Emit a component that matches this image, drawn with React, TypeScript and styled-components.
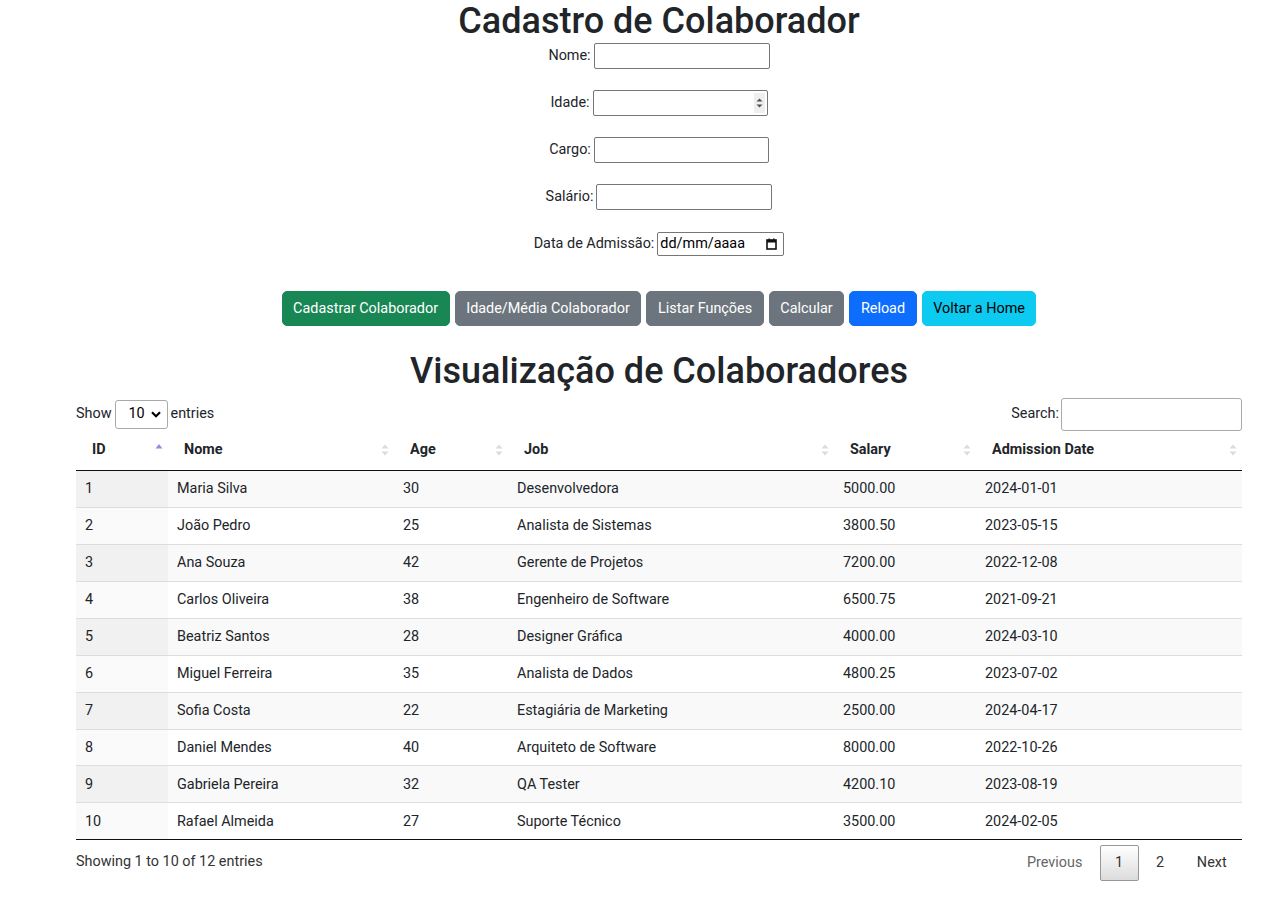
import React from 'react';
import styled, { createGlobalStyle, css } from 'styled-components';

const GlobalStyle = createGlobalStyle`
  body {
    margin: 0;
    font-family: "Segoe UI", Roboto, "Noto Sans", sans-serif;
    font-size: 14.4px;
    line-height: 1.5;
    color: #212529;
    background: #fff;
  }
  * { box-sizing: border-box; }
`;

type Variant = 'success' | 'secondary' | 'primary' | 'info';

interface Employee {
  id: number;
  name: string;
  age: number;
  job: string;
  salary: string;
  date: string;
}

const employees: Employee[] = [
  { id: 1, name: 'Maria Silva', age: 30, job: 'Desenvolvedora', salary: '5000.00', date: '2024-01-01' },
  { id: 2, name: 'João Pedro', age: 25, job: 'Analista de Sistemas', salary: '3800.50', date: '2023-05-15' },
  { id: 3, name: 'Ana Souza', age: 42, job: 'Gerente de Projetos', salary: '7200.00', date: '2022-12-08' },
  { id: 4, name: 'Carlos Oliveira', age: 38, job: 'Engenheiro de Software', salary: '6500.75', date: '2021-09-21' },
  { id: 5, name: 'Beatriz Santos', age: 28, job: 'Designer Gráfica', salary: '4000.00', date: '2024-03-10' },
  { id: 6, name: 'Miguel Ferreira', age: 35, job: 'Analista de Dados', salary: '4800.25', date: '2023-07-02' },
  { id: 7, name: 'Sofia Costa', age: 22, job: 'Estagiária de Marketing', salary: '2500.00', date: '2024-04-17' },
  { id: 8, name: 'Daniel Mendes', age: 40, job: 'Arquiteto de Software', salary: '8000.00', date: '2022-10-26' },
  { id: 9, name: 'Gabriela Pereira', age: 32, job: 'QA Tester', salary: '4200.10', date: '2023-08-19' },
  { id: 10, name: 'Rafael Almeida', age: 27, job: 'Suporte Técnico', salary: '3500.00', date: '2024-02-05' },
];

const columns = [
  { label: 'ID', width: 92 },
  { label: 'Nome', width: 226 },
  { label: 'Age', width: 114 },
  { label: 'Job', width: 326 },
  { label: 'Salary', width: 142 },
  { label: 'Admission Date', width: 266 },
];

const Page = styled.div`
  width: 1166px;
  margin-left: 76px;
`;

const Title = styled.h1`
  margin: 0;
  font-size: 36px;
  font-weight: 500;
  line-height: 1.2;
  text-align: center;
`;

const Form = styled.form`
  display: flex;
  flex-direction: column;
  align-items: center;
  gap: 21px;
`;

const FieldRow = styled.div`
  display: flex;
  align-items: center;
  gap: 3px;
  height: 26px;
`;

const Label = styled.label`
  font-size: 14.4px;
`;

const TextInput = styled.input<{ $w: number }>`
  width: ${p => p.$w}px;
  height: 26px;
  padding: 1px 2px;
  border: 1px solid #767676;
  border-radius: 2px;
  font: inherit;
  background: #fff;
`;

const NumberWrap = styled.div`
  position: relative;
`;

const Spinner = styled.div`
  position: absolute;
  top: 3px;
  right: 3px;
  width: 11px;
  height: 20px;
  background: #efefef;
  display: flex;
  align-items: center;
  justify-content: center;
`;

const DateBox = styled.div`
  width: 127px;
  height: 24px;
  border: 1px solid #767676;
  border-radius: 2px;
  display: flex;
  align-items: center;
  justify-content: space-between;
  padding: 0 6px 0 2px;
  font-size: 14.4px;
  color: #000;
`;

const ButtonBar = styled.div`
  display: flex;
  justify-content: center;
  gap: 5px;
  margin-top: 34px;
`;

const variantStyles: Record<Variant, ReturnType<typeof css>> = {
  success: css`background: #198754; border-color: #198754; color: #fff;`,
  secondary: css`background: #6c757d; border-color: #6c757d; color: #fff;`,
  primary: css`background: #0d6efd; border-color: #0d6efd; color: #fff;`,
  info: css`background: #0dcaf0; border-color: #0dcaf0; color: #000;`,
};

const Button = styled.button<{ $variant: Variant }>`
  font: inherit;
  font-size: 14.4px;
  line-height: 21.6px;
  padding: 5.4px 10.6px;
  border: 1px solid transparent;
  border-radius: 5px;
  cursor: pointer;
  ${p => variantStyles[p.$variant]}
`;

const SectionTitle = styled.h2`
  margin: 24px 0 5px;
  font-size: 36px;
  font-weight: 500;
  line-height: 1.2;
  text-align: center;
`;

const Controls = styled.div`
  display: flex;
  justify-content: space-between;
  align-items: center;
  height: 33px;
`;

const LengthLabel = styled.div`
  display: flex;
  align-items: center;
  gap: 3px;
`;

const FakeSelect = styled.div`
  width: 53px;
  height: 29px;
  border: 1px solid #aaa;
  border-radius: 3px;
  display: flex;
  align-items: center;
  justify-content: space-between;
  padding: 0 6px 0 13px;
  color: #000;
`;

const SearchLabel = styled.label`
  display: flex;
  align-items: center;
  gap: 2px;
`;

const SearchInput = styled.input`
  width: 181px;
  height: 33px;
  border: 1px solid #aaa;
  border-radius: 3px;
  padding: 4px;
  font: inherit;
`;

const Table = styled.table`
  width: 1166px;
  border-collapse: separate;
  border-spacing: 0;
  table-layout: fixed;
  border-bottom: 1px solid #111;
`;

const Th = styled.th`
  padding: 8.7px 5px 8.7px 16px;
  text-align: left;
  font-weight: 700;
  line-height: 21.6px;
  border-bottom: 1px solid #111;
`;

const ThInner = styled.div`
  display: flex;
  align-items: center;
  justify-content: space-between;
`;

const Tr = styled.tr<{ $odd: boolean }>`
  background: ${p => (p.$odd ? '#f9f9f9' : '#fff')};
`;

const Td = styled.td<{ $sorted?: boolean; $odd: boolean; $first: boolean }>`
  padding: 7.2px 9px;
  line-height: 21.6px;
  border-top: ${p => (p.$first ? 'none' : '1px solid #ddd')};
  background: ${p => (p.$sorted ? (p.$odd ? '#f1f1f1' : '#fafafa') : 'transparent')};
`;

const Footer = styled.div`
  display: flex;
  justify-content: space-between;
  align-items: flex-start;
`;

const Info = styled.div`
  padding-top: 11px;
  color: #333;
`;

const Pagination = styled.div`
  display: flex;
  padding-top: 5px;
`;

const PageButton = styled.span<{ $current?: boolean; $disabled?: boolean }>`
  display: inline-block;
  padding: 6px 14.4px;
  margin-left: 2px;
  line-height: 21.6px;
  border: 1px solid transparent;
  border-radius: 2px;
  color: ${p => (p.$disabled ? '#666' : '#333')};
  ${p =>
    p.$current &&
    css`
      border-color: #979797;
      background: linear-gradient(to bottom, #fff 0%, #dcdcdc 100%);
    `}
`;

const SortIcon: React.FC<{ active?: boolean }> = ({ active }) => (
  <svg width="8" height="12" viewBox="0 0 8 12">
    {active ? (
      <path d="M4 0 L7.5 4.5 L0.5 4.5 Z" fill="#8e8fdd" />
    ) : (
      <>
        <path d="M4 0.5 L7.5 4.5 L0.5 4.5 Z" fill="#dcdcdc" />
        <path d="M4 11.5 L7.5 7.5 L0.5 7.5 Z" fill="#dcdcdc" />
      </>
    )}
  </svg>
);

const App: React.FC = () => {
  return (
    <Page>
      <GlobalStyle />
      <Title>Cadastro de Colaborador</Title>
      <Form onSubmit={e => e.preventDefault()}>
        <FieldRow>
          <Label>Nome:</Label>
          <TextInput $w={176} />
        </FieldRow>
        <FieldRow>
          <Label>Idade:</Label>
          <NumberWrap>
            <TextInput $w={175} />
            <Spinner>
              <svg width="7" height="14" viewBox="0 0 7 14">
                <path d="M3.5 2.5 L6.5 5.5 L0.5 5.5 Z" fill="#505050" />
                <path d="M3.5 11.5 L6.5 8.5 L0.5 8.5 Z" fill="#505050" />
              </svg>
            </Spinner>
          </NumberWrap>
        </FieldRow>
        <FieldRow>
          <Label>Cargo:</Label>
          <TextInput $w={175} />
        </FieldRow>
        <FieldRow>
          <Label>Salário:</Label>
          <TextInput $w={176} />
        </FieldRow>
        <FieldRow>
          <Label>Data de Admissão:</Label>
          <DateBox>
            <span>dd/mm/aaaa</span>
            <svg width="11" height="12" viewBox="0 0 11 12">
              <rect x="1" y="2" width="9" height="9" fill="none" stroke="#111" strokeWidth="1.6" />
              <rect x="1" y="2" width="9" height="2.5" fill="#111" />
              <rect x="2.5" y="0.5" width="1.4" height="2" fill="#111" />
              <rect x="7.1" y="0.5" width="1.4" height="2" fill="#111" />
            </svg>
          </DateBox>
        </FieldRow>
      </Form>

      <ButtonBar>
        <Button $variant="success">Cadastrar Colaborador</Button>
        <Button $variant="secondary">Idade/Média Colaborador</Button>
        <Button $variant="secondary">Listar Funções</Button>
        <Button $variant="secondary">Calcular</Button>
        <Button $variant="primary">Reload</Button>
        <Button $variant="info">Voltar a Home</Button>
      </ButtonBar>

      <SectionTitle>Visualização de Colaboradores</SectionTitle>

      <Controls>
        <LengthLabel>
          Show
          <FakeSelect>
            <span>10</span>
            <svg width="10" height="7" viewBox="0 0 10 7">
              <path d="M1 1.2 L5 5.2 L9 1.2" fill="none" stroke="#000" strokeWidth="2.2" />
            </svg>
          </FakeSelect>
          entries
        </LengthLabel>
        <SearchLabel>
          Search:
          <SearchInput />
        </SearchLabel>
      </Controls>

      <Table>
        <colgroup>
          {columns.map(c => (
            <col key={c.label} style={{ width: c.width }} />
          ))}
        </colgroup>
        <thead>
          <tr>
            {columns.map((c, i) => (
              <Th key={c.label}>
                <ThInner>
                  <span>{c.label}</span>
                  <SortIcon active={i === 0} />
                </ThInner>
              </Th>
            ))}
          </tr>
        </thead>
        <tbody>
          {employees.map((e, idx) => {
            const odd = idx % 2 === 0;
            const first = idx === 0;
            return (
              <Tr key={e.id} $odd={odd}>
                <Td $sorted $odd={odd} $first={first}>{e.id}</Td>
                <Td $odd={odd} $first={first}>{e.name}</Td>
                <Td $odd={odd} $first={first}>{e.age}</Td>
                <Td $odd={odd} $first={first}>{e.job}</Td>
                <Td $odd={odd} $first={first}>{e.salary}</Td>
                <Td $odd={odd} $first={first}>{e.date}</Td>
              </Tr>
            );
          })}
        </tbody>
      </Table>

      <Footer>
        <Info>Showing 1 to 10 of 12 entries</Info>
        <Pagination>
          <PageButton $disabled>Previous</PageButton>
          <PageButton $current>1</PageButton>
          <PageButton>2</PageButton>
          <PageButton>Next</PageButton>
        </Pagination>
      </Footer>
    </Page>
  );
};

export default App;
